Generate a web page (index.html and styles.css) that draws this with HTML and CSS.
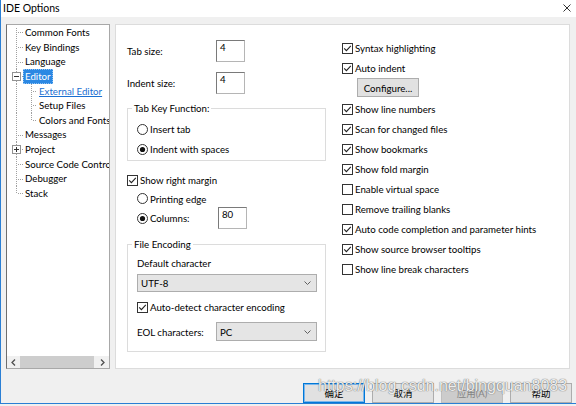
FILE: index.html
```html
<!DOCTYPE html>
<html>
<head>
<meta charset="utf-8">
<title>IDE Options</title>
<link rel="stylesheet" href="styles.css">
</head>
<body>
<div class="window">
  <div class="titlebar">
    <span class="title">IDE Options</span>
    <svg class="close" width="8" height="8" viewBox="0 0 8 8"><path d="M0.5 0.5 L7.5 7.5 M7.5 0.5 L0.5 7.5" stroke="#333" stroke-width="1" fill="none"/></svg>
  </div>

  <div class="main">
    <div class="tree">
      <ul class="tree-list">
        <li class="node"><span class="indent"></span><span class="twig first"></span><span class="label">Common Fonts</span></li>
        <li class="node"><span class="indent"></span><span class="twig"></span><span class="label">Key Bindings</span></li>
        <li class="node"><span class="indent"></span><span class="twig"></span><span class="label">Language</span></li>
        <li class="node"><span class="indent"></span><span class="twig"><span class="exp"></span></span><span class="label selected">Editor</span></li>
        <li class="node"><span class="indent"></span><span class="vline"></span><span class="twig child"></span><span class="label link">External Editor</span></li>
        <li class="node"><span class="indent"></span><span class="vline"></span><span class="twig child"></span><span class="label">Setup Files</span></li>
        <li class="node"><span class="indent"></span><span class="vline"></span><span class="twig child last"></span><span class="label">Colors and Fonts</span></li>
        <li class="node"><span class="indent"></span><span class="twig"></span><span class="label">Messages</span></li>
        <li class="node"><span class="indent"></span><span class="twig"><span class="exp plus"></span></span><span class="label">Project</span></li>
        <li class="node"><span class="indent"></span><span class="twig"></span><span class="label">Source Code Control</span></li>
        <li class="node"><span class="indent"></span><span class="twig"></span><span class="label">Debugger</span></li>
        <li class="node"><span class="indent"></span><span class="twig last"></span><span class="label">Stack</span></li>
      </ul>
      <div class="hscroll">
        <span class="sb-arrow"><svg width="5" height="7" viewBox="0 0 5 7"><path d="M4 0.5 L1 3.5 L4 6.5" stroke="#505050" stroke-width="1.3" fill="none"/></svg></span>
        <span class="sb-thumb"></span>
        <span class="sb-track"></span>
        <span class="sb-arrow"><svg width="5" height="7" viewBox="0 0 5 7"><path d="M1 0.5 L4 3.5 L1 6.5" stroke="#505050" stroke-width="1.3" fill="none"/></svg></span>
      </div>
    </div>

    <div class="panel">
      <div class="col-left">
        <div class="field-row">
          <span class="field-label">Tab size:</span>
          <span class="textbox">4</span>
        </div>
        <div class="field-row second">
          <span class="field-label">Indent size:</span>
          <span class="textbox">4</span>
        </div>

        <fieldset class="group tabkey">
          <legend>Tab Key Function:</legend>
          <div class="group-body">
            <div class="opt-row">
              <svg class="radio" viewBox="0 0 11 11"><circle cx="5.5" cy="5.5" r="5" fill="#fff" stroke="#333"/></svg>
              <span>Insert tab</span>
            </div>
            <div class="opt-row">
              <svg class="radio" viewBox="0 0 11 11"><circle cx="5.5" cy="5.5" r="5" fill="#fff" stroke="#333"/><circle cx="5.5" cy="5.5" r="2.6" fill="#111"/></svg>
              <span>Indent with spaces</span>
            </div>
          </div>
        </fieldset>

        <div class="opt-row margin-row">
          <svg class="check" viewBox="0 0 11 11"><rect x="0.5" y="0.5" width="10" height="10" fill="#fff" stroke="#333"/><path d="M2.2 5.4 L4.4 7.7 L8.8 2.9" fill="none" stroke="#222" stroke-width="1.1"/></svg>
          <span>Show right margin</span>
        </div>
        <div class="opt-row sub printing">
          <svg class="radio" viewBox="0 0 11 11"><circle cx="5.5" cy="5.5" r="5" fill="#fff" stroke="#333"/></svg>
          <span>Printing edge</span>
        </div>
        <div class="opt-row sub columns">
          <span class="opt-cell">
            <svg class="radio" viewBox="0 0 11 11"><circle cx="5.5" cy="5.5" r="5" fill="#fff" stroke="#333"/><circle cx="5.5" cy="5.5" r="2.6" fill="#111"/></svg>
            <span>Columns:</span>
          </span>
          <span class="textbox">80</span>
        </div>

        <fieldset class="group encoding">
          <legend>File Encoding</legend>
          <div class="group-body">
            <div class="plain-label">Default character</div>
            <div class="combo wide"><span>UTF-8</span><svg width="7" height="4" viewBox="0 0 7 4"><path d="M0.5 0.5 L3.5 3.5 L6.5 0.5" stroke="#606060" fill="none"/></svg></div>
            <div class="opt-row autodetect">
              <svg class="check" viewBox="0 0 11 11"><rect x="0.5" y="0.5" width="10" height="10" fill="#fff" stroke="#333"/><path d="M2.2 5.4 L4.4 7.7 L8.8 2.9" fill="none" stroke="#222" stroke-width="1.1"/></svg>
              <span>Auto-detect character encoding</span>
            </div>
            <div class="eol-row">
              <span class="opt-cell">EOL characters:</span>
              <div class="combo narrow"><span>PC</span><svg width="7" height="4" viewBox="0 0 7 4"><path d="M0.5 0.5 L3.5 3.5 L6.5 0.5" stroke="#606060" fill="none"/></svg></div>
            </div>
          </div>
        </fieldset>
      </div>

      <div class="col-right">
        <div class="opt-row"><svg class="check" viewBox="0 0 11 11"><rect x="0.5" y="0.5" width="10" height="10" fill="#fff" stroke="#333"/><path d="M2.2 5.4 L4.4 7.7 L8.8 2.9" fill="none" stroke="#222" stroke-width="1.1"/></svg><span>Syntax highlighting</span></div>
        <div class="opt-row"><svg class="check" viewBox="0 0 11 11"><rect x="0.5" y="0.5" width="10" height="10" fill="#fff" stroke="#333"/><path d="M2.2 5.4 L4.4 7.7 L8.8 2.9" fill="none" stroke="#222" stroke-width="1.1"/></svg><span>Auto indent</span></div>
        <div class="btn configure">Configure...</div>
        <div class="opt-row"><svg class="check" viewBox="0 0 11 11"><rect x="0.5" y="0.5" width="10" height="10" fill="#fff" stroke="#333"/><path d="M2.2 5.4 L4.4 7.7 L8.8 2.9" fill="none" stroke="#222" stroke-width="1.1"/></svg><span>Show line numbers</span></div>
        <div class="opt-row"><svg class="check" viewBox="0 0 11 11"><rect x="0.5" y="0.5" width="10" height="10" fill="#fff" stroke="#333"/><path d="M2.2 5.4 L4.4 7.7 L8.8 2.9" fill="none" stroke="#222" stroke-width="1.1"/></svg><span>Scan for changed files</span></div>
        <div class="opt-row"><svg class="check" viewBox="0 0 11 11"><rect x="0.5" y="0.5" width="10" height="10" fill="#fff" stroke="#333"/><path d="M2.2 5.4 L4.4 7.7 L8.8 2.9" fill="none" stroke="#222" stroke-width="1.1"/></svg><span>Show bookmarks</span></div>
        <div class="opt-row"><svg class="check" viewBox="0 0 11 11"><rect x="0.5" y="0.5" width="10" height="10" fill="#fff" stroke="#333"/><path d="M2.2 5.4 L4.4 7.7 L8.8 2.9" fill="none" stroke="#222" stroke-width="1.1"/></svg><span>Show fold margin</span></div>
        <div class="opt-row"><svg class="check" viewBox="0 0 11 11"><rect x="0.5" y="0.5" width="10" height="10" fill="#fff" stroke="#333"/></svg><span>Enable virtual space</span></div>
        <div class="opt-row"><svg class="check" viewBox="0 0 11 11"><rect x="0.5" y="0.5" width="10" height="10" fill="#fff" stroke="#333"/></svg><span>Remove trailing blanks</span></div>
        <div class="opt-row"><svg class="check" viewBox="0 0 11 11"><rect x="0.5" y="0.5" width="10" height="10" fill="#fff" stroke="#333"/><path d="M2.2 5.4 L4.4 7.7 L8.8 2.9" fill="none" stroke="#222" stroke-width="1.1"/></svg><span>Auto code completion and parameter hints</span></div>
        <div class="opt-row"><svg class="check" viewBox="0 0 11 11"><rect x="0.5" y="0.5" width="10" height="10" fill="#fff" stroke="#333"/><path d="M2.2 5.4 L4.4 7.7 L8.8 2.9" fill="none" stroke="#222" stroke-width="1.1"/></svg><span>Show source browser tooltips</span></div>
        <div class="opt-row"><svg class="check" viewBox="0 0 11 11"><rect x="0.5" y="0.5" width="10" height="10" fill="#fff" stroke="#333"/></svg><span>Show line break characters</span></div>
      </div>
    </div>
  </div>

  <div class="buttons">
    <div class="btn dialog default">确定</div>
    <div class="btn dialog">取消</div>
    <div class="btn dialog disabled">应用(A)</div>
    <div class="btn dialog">帮助</div>
  </div>

  <div class="watermark">https://blog.csdn.net/bingquan8083</div>
</div>
</body>
</html>
```

FILE: styles.css
```css
* { box-sizing: border-box; }

html, body {
  margin: 0;
  padding: 0;
  background: #f0f0f0;
}

body {
  font-family: Lato, "Noto Sans", "Noto Sans CJK SC", sans-serif;
  font-size: 9.7px;
  color: #000;
}

.window {
  position: relative;
  width: 576px;
  height: 404px;
  background: #f0f0f0;
  border-left: 1px solid #2a7fd4;
  border-bottom: 1px solid #2a7fd4;
  display: flex;
  flex-direction: column;
}

/* title bar */
.titlebar {
  height: 17px;
  background: #fff;
  display: flex;
  align-items: center;
  justify-content: space-between;
  padding: 0 5px 0 2px;
}

.title {
  font-size: 10.5px;
  line-height: 17px;
}

.close { display: block; margin-top: -1px; }

/* main area */
.main {
  display: flex;
  gap: 5px;
  padding: 7px 6px 0 5px;
  height: 369px;
}

/* tree */
.tree {
  width: 104px;
  height: 345px;
  background: #fff;
  border: 1px solid #a8a8a8;
  border-left-color: #6e6e6e;
  display: flex;
  flex-direction: column;
}

.tree-list {
  list-style: none;
  margin: 0;
  padding: 0;
  flex: 1;
  overflow: hidden;
}

.node {
  display: flex;
  height: 14.64px;
  align-items: stretch;
  white-space: nowrap;
}

.indent { width: 9px; flex: none; }

.twig, .vline {
  position: relative;
  flex: none;
}

.twig { width: 7px; }
.twig.child { width: 6px; }
.vline { width: 15px; }

.twig::before, .vline::before {
  content: "";
  position: absolute;
  left: 0;
  top: 0;
  bottom: 0;
  width: 1px;
  background: repeating-linear-gradient(to bottom, #a0a0a0 0 1px, transparent 1px 2px);
}

.twig.first::before { top: 3px; }
.twig.last::before { bottom: 50%; }

.twig::after {
  content: "";
  position: absolute;
  left: 1px;
  right: 0;
  top: 50%;
  height: 1px;
  background: repeating-linear-gradient(to right, transparent 0 1px, #a0a0a0 1px 2px);
}

.exp {
  position: absolute;
  z-index: 1;
  left: -4px;
  top: 3px;
  width: 9px;
  height: 9px;
  border: 1px solid #929292;
  background: #fff;
}

.exp::before {
  content: "";
  position: absolute;
  left: 1px;
  top: 3px;
  width: 5px;
  height: 1px;
  background: #333;
}

.exp.plus::after {
  content: "";
  position: absolute;
  left: 3px;
  top: 1px;
  width: 1px;
  height: 5px;
  background: #333;
}

.label {
  padding: 0 2px;
  line-height: 14.64px;
}

.label.selected {
  background: #2b88e3;
  color: #fff;
  outline: 1px dotted #8fc2f3;
  outline-offset: -1px;
}

.label.link {
  color: #1a6fd1;
  text-decoration: underline;
}

.hscroll {
  height: 12px;
  display: flex;
  align-items: stretch;
  background: #f0f0f0;
}

.sb-arrow {
  width: 13px;
  display: flex;
  align-items: center;
  justify-content: center;
}

.sb-thumb {
  width: 74px;
  background: #cdcdcd;
}

.sb-track { flex: 1; }

/* panel */
.panel {
  flex: 1;
  height: 345px;
  background: #fff;
  border: 1px solid #dcdcdc;
  display: flex;
}

.col-left {
  width: 210px;
  padding: 15px 0 0 11px;
}

.col-right {
  padding: 13px 0 0 16px;
}

.field-row {
  display: flex;
  align-items: center;
  height: 22px;
}

.field-row.second { margin-top: 10px; }

.field-label { width: 89px; }

.textbox {
  width: 29px;
  height: 22px;
  border: 1px solid #7a7a7a;
  border-right-color: #b5b5b5;
  border-bottom-color: #b5b5b5;
  padding: 0 0 0 3px;
  line-height: 13px;
  background: #fff;
}

.group {
  width: 199px;
  margin: 0;
  border: 1px solid #dcdcdc;
  padding: 4px 0 1px 4px;
  min-width: 0;
}

.group legend {
  padding: 0 2px;
  line-height: 14px;
}

.group-body { padding-left: 5px; }

.group.tabkey { margin-top: 7px; }

.opt-row {
  display: flex;
  align-items: center;
  height: 20px;
  gap: 2px;
  white-space: nowrap;
}

.radio, .check {
  width: 11px;
  height: 11px;
  flex: none;
}

.opt-row.margin-row { margin-top: 9px; }

.opt-row.sub { padding-left: 10px; }
.opt-row.printing { height: 17px; }
.opt-row.columns { height: 22px; }

.opt-cell {
  width: 79px;
  display: flex;
  align-items: center;
  gap: 2px;
}

.group.encoding {
  margin-top: 8px;
  padding-top: 5px;
  padding-bottom: 10px;
}

.plain-label {
  height: 15px;
  line-height: 15px;
}

.combo {
  height: 18px;
  background: #e5e5e5;
  border: 1px solid #adadad;
  display: flex;
  align-items: center;
  justify-content: space-between;
  padding: 0 5px 0 3px;
}

.combo.wide { width: 180px; margin-top: 3px; }
.combo.narrow { width: 101px; height: 19px; }

.opt-row.autodetect { margin-top: 5px; }

.eol-row {
  display: flex;
  align-items: center;
  margin-top: 5px;
}

/* buttons */
.btn {
  background: #e1e1e1;
  border: 1px solid #adadad;
  display: flex;
  align-items: center;
  justify-content: center;
}

.btn.configure {
  width: 62px;
  height: 19px;
  margin: 0 0 2px 15px;
}

.buttons {
  display: flex;
  justify-content: flex-end;
  gap: 7px;
  padding-right: 4px;
  margin-top: 8px;
}

.btn.dialog {
  width: 62px;
  height: 20px;
  font-size: 9.5px;
}

.btn.default {
  border-color: #0078d7;
  box-shadow: inset 0 0 0 1px #7ab6ec;
}

.btn.disabled {
  background: #cccccc;
  border-color: #bfbfbf;
  color: #838383;
}

/* watermark overlay */
.watermark {
  position: absolute;
  left: 317px;
  top: 376px;
  font-family: "Liberation Sans", Arial, sans-serif;
  font-size: 16px;
  line-height: 20px;
  color: rgba(255, 255, 255, 0.9);
  text-shadow: 0 0 1px rgba(90, 90, 90, 0.9), 0 0 1px rgba(90, 90, 90, 0.6);
  white-space: nowrap;
  pointer-events: none;
}
```
